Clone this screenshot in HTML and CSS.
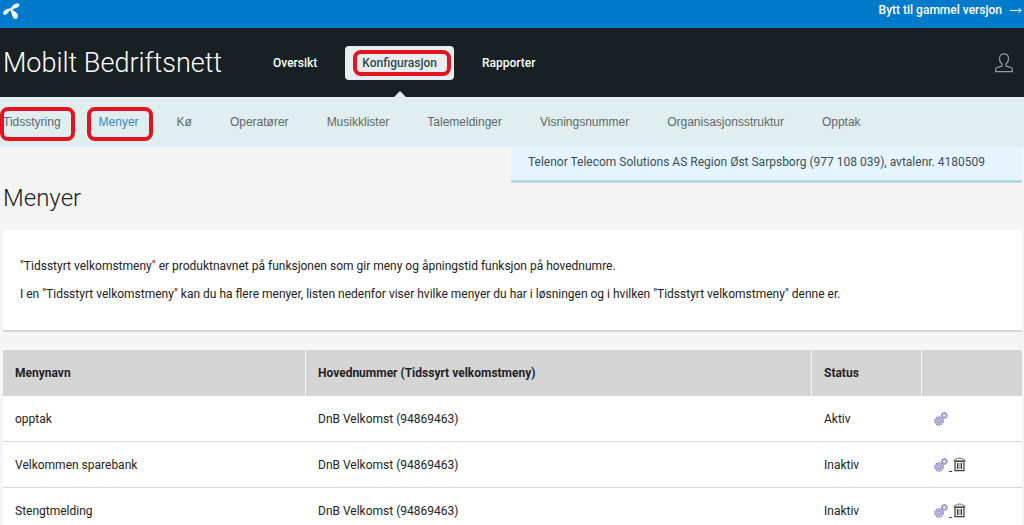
FILE: index.html
```html
<!DOCTYPE html>
<html lang="no">
<head>
<meta charset="utf-8">
<title>Mobilt Bedriftsnett</title>
<link rel="stylesheet" href="styles.css">
</head>
<body>
<svg class="defs" aria-hidden="true">
  <symbol id="gears" viewBox="0 0 14 14">
    <g fill="none" stroke="#8482b8">
      <circle cx="5" cy="9" r="4" stroke-width="1.6" stroke-dasharray="1.8 .7"/>
      <circle cx="5" cy="9" r="2.7" stroke="#b3b1df" stroke-width="1.8"/>
      <circle cx="5" cy="9" r="1.4" stroke="#66649a" stroke-width=".7"/>
      <circle cx="10.3" cy="3.5" r="2.8" stroke-width="1.3" stroke-dasharray="1.4 .6"/>
      <circle cx="10.3" cy="3.5" r="1.8" stroke="#9a98cc" stroke-width="1.2"/>
    </g>
  </symbol>
  <symbol id="bin" viewBox="0 0 13 15">
    <path d="M2 4.5h9v9.2H2z" fill="#f4f4f0" stroke="#3c3c38" stroke-width="1.2"/>
    <path d="M.8 3.8C1 2.600 2 2.200 3.600 2 4 .7 9 .7 9.400 2c1.600.2 2.600.6 2.800 1.800z" fill="#eee" stroke="#55554f" stroke-width=".9"/>
    <path d="M4.700 6v6M8.300 6v6" stroke="#33332f" stroke-width="1.300"/>
    <path d="M6.500 6v6" stroke="#aaaaa4" stroke-width=".8"/>
  </symbol>
</svg>
<div class="topbar">
  <a class="logo" href="#" aria-label="Telenor">
    <svg width="17" height="17" viewBox="0 0 17 17" fill="#fff">
      <path d="M7.800 6C8.600 2.800 11.500.3 15 .5c1.900.2 2 2 .6 3.200C13.800 5.200 11 5 9.200 6.600z"/>
      <path d="M8.800 5.800C6 4.600 1.500 6.200.2 9.200c-.7 2 .9 3.100 2.700 2.300C5.300 10.400 5.800 7.800 8.600 6.800z"/>
      <path d="M7.900 6c-.3 2.800.7 4.300 1.500 6.700.7 2.200 2.200 3.700 4 3.100 1.800-.7 1.900-3.300.8-5.300C12.900 8.300 10 8 9 5.900z"/>
    </svg>
  </a>
  <a class="switch" href="#">Bytt til gammel versjon
    <svg width="12" height="8" viewBox="0 0 12 8" fill="none" stroke="#fff" aria-hidden="true"><path d="M0 4.500h11M8.500 2L11 4.500 8.500 7"/></svg>
  </a>
</div>
<header class="header">
  <div class="brand">Mobilt Bedriftsnett</div>
  <nav class="mainnav">
    <a class="mainlink" href="#">Oversikt</a>
    <a class="mainlink active" href="#"><span class="marked">Konfigurasjon</span></a>
    <a class="mainlink" href="#">Rapporter</a>
  </nav>
  <a class="user" href="#" aria-label="Min bruker">
    <svg width="18" height="20" viewBox="0 0 18 20" fill="none" stroke="#92989a" stroke-width="1.200"><path d="M7 13v-2C5.200 9.800 4.500 8 4.500 5.600 4.500 2.600 6.200.8 9 .8s4.500 1.800 4.500 4.800c0 2.400-.7 4.200-2.500 5.400v2l4.600 1.300c1.300.4 1.800 1.200 1.800 2.400v2H.6v-2c0-1.200.5-2 1.800-2.400z"/></svg>
  </a>
</header>
<nav class="subnav">
  <a class="sublink marked" href="#">Tidsstyring</a>
  <a class="sublink marked current" href="#">Menyer</a>
  <a class="sublink" href="#">Kø</a>
  <a class="sublink" href="#">Operatører</a>
  <a class="sublink" href="#">Musikklister</a>
  <a class="sublink" href="#">Talemeldinger</a>
  <a class="sublink" href="#">Visningsnummer</a>
  <a class="sublink" href="#">Organisasjonsstruktur</a>
  <a class="sublink" href="#">Opptak</a>
</nav>
<main class="page">
  <div class="account">Telenor Telecom Solutions AS Region Øst Sarpsborg (977 108 039), avtalenr. 4180509</div>
  <h1 class="title">Menyer</h1>
  <section class="intro">
    <p>"Tidsstyrt velkomstmeny" er produktnavnet på funksjonen som gir meny og åpningstid funksjon på hovednumre.</p>
    <p>I en "Tidsstyrt velkomstmeny" kan du ha flere menyer, listen nedenfor viser hvilke menyer du har i løsningen og i hvilken "Tidsstyrt velkomstmeny" denne er.</p>
  </section>
  <table class="menus">
    <colgroup><col class="c-name"><col class="c-number"><col class="c-status"><col></colgroup>
    <thead>
      <tr><th>Menynavn</th><th>Hovednummer (Tidssyrt velkomstmeny)</th><th>Status</th><th></th></tr>
    </thead>
    <tbody>
      <tr><td>opptak</td><td>DnB Velkomst (94869463)</td><td>Aktiv</td>
        <td><div class="actions"><button aria-label="Rediger"><svg width="14" height="14"><use href="#gears"/></svg></button></div></td></tr>
      <tr><td>Velkommen sparebank</td><td>DnB Velkomst (94869463)</td><td>Inaktiv</td>
        <td><div class="actions"><button aria-label="Rediger"><svg width="14" height="14"><use href="#gears"/></svg></button><span class="tick"></span><button aria-label="Slett"><svg width="13" height="15"><use href="#bin"/></svg></button></div></td></tr>
      <tr><td>Stengtmelding</td><td>DnB Velkomst (94869463)</td><td>Inaktiv</td>
        <td><div class="actions"><button aria-label="Rediger"><svg width="14" height="14"><use href="#gears"/></svg></button><span class="tick"></span><button aria-label="Slett"><svg width="13" height="15"><use href="#bin"/></svg></button></div></td></tr>
    </tbody>
  </table>
</main>
</body>
</html>
```
FILE: styles.css
```css
* { box-sizing: border-box; }
html { overflow: hidden; }
body {
  margin: 0;
  background: #f5f5f5;
  color: #222;
  font: 12px/20px Roboto, "Noto Sans", sans-serif;
}
a { color: inherit; text-decoration: none; }
svg { display: block; }
.defs { position: absolute; width: 0; height: 0; }

.topbar {
  display: flex;
  justify-content: space-between;
  height: 28px;
  padding: 0 2px 0 3px;
  background: #007acb;
  color: #fff;
}
.logo { padding-top: 3px; }
.switch { display: flex; align-items: center; gap: 8px; height: 20px; font-weight: 500; }

.header {
  display: flex;
  align-items: center;
  height: 69px;
  padding: 0 11px 0 3px;
  background: #182024;
  color: #fff;
}
.brand { width: 254px; font-size: 27px; line-height: 36px; font-weight: 300; white-space: nowrap; }
.mainnav { display: flex; gap: 12px; flex: 1; }
.mainlink { position: relative; padding: 7px 16px; border-radius: 4px; font-weight: 500; }
.mainlink.active { padding: 7px 17px; background: #e8eef0; color: #37474c; }
.mainlink.active::after {
  content: "";
  position: absolute;
  left: 50%;
  bottom: -18px;
  margin-left: -7px;
  border: 7px solid transparent;
  border-top: 0;
  border-bottom-color: #e0eeef;
}

.subnav {
  display: flex;
  align-items: center;
  gap: 38px;
  height: 50px;
  padding: 0 3px;
  background: #e0eeef;
  color: #5e696c;
  font-family: "Liberation Sans", Arial, sans-serif;
}
.current { color: #3489cb; }

/* Hand-drawn style highlight around selected links */
.marked { position: relative; }
.marked::before {
  content: "";
  position: absolute;
  inset: -5px -14px -9px -12px;
  border: 4px solid #e1141f;
  border-radius: 8px;
}
.subnav .marked:first-child::before { left: -3px; }
.mainlink .marked::before { inset: -6px -14px -6px -9px; }

.page { padding: 0 2px 0 3px; }
.account {
  width: 50%;
  min-width: 511px;
  height: 36px;
  margin-left: auto;
  padding: 5px 17px;
  background: #e6f5fd;
  border-bottom: 3px solid #bcd8df;
  color: #3a5058;
  white-space: nowrap;
}
.title { margin: 0 0 17px; font-size: 24px; line-height: 30px; font-weight: 300; }
.intro {
  margin-bottom: 18px;
  padding: 22px 17px;
  background: #fff;
  border-bottom: 2px solid #d6d6d6;
}
.intro p { margin: 0; line-height: 28px; }

.menus { width: 100%; table-layout: fixed; border-collapse: separate; border-spacing: 0; background: #fff; }
.c-name { width: 303px; }
.c-number { width: 506px; }
.c-status { width: 110px; }
.menus th {
  height: 46px;
  padding: 0 12px;
  background: #d5d5d5;
  border-right: 1px solid #f5f5f5;
  text-align: left;
  font-weight: 700;
}
.menus th:last-child { border-right: 0; }
.menus td { height: 46px; padding: 0 12px; border-bottom: 1px solid #d6d6d6; }
.actions { display: flex; align-items: center; }
.actions button { padding: 0; border: 0; background: none; cursor: pointer; }
.tick { align-self: flex-end; width: 3px; height: 1px; margin: 0 1px; background: #3a3a8c; }
```
